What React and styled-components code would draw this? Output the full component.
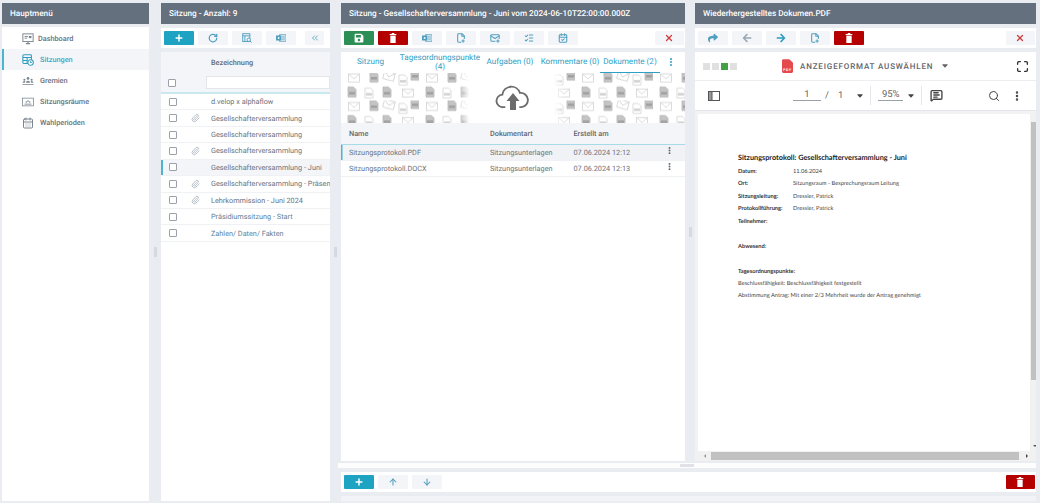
import React from "react";
import styled, { createGlobalStyle } from "styled-components";
import {
  Plus,
  RotateCw,
  X,
  ChevronsLeft,
  ListChecks,
  MailPlus,
  FilePlus2,
  Paperclip,
  CalendarDays,
  CalendarCheck,
  Search,
  MoreVertical,
  MessageSquareText,
  Maximize,
  ArrowUp,
  ArrowDown,
} from "lucide-react";
import { FaSave, FaArrowLeft, FaArrowRight, FaShare } from "react-icons/fa";
import { TiArrowSortedDown } from "react-icons/ti";

const GlobalStyle = createGlobalStyle`
  html, body {
    margin: 0;
    padding: 0;
    height: 100%;
    overflow: hidden;
    background: #e9ecf0;
    font-family: Roboto, "Liberation Sans", sans-serif;
    text-rendering: geometricPrecision;
  }
`;

const Page = styled.div`
  display: flex;
  width: 1040px;
  height: 503px;
  box-sizing: border-box;
  padding: 3px 4px 2px 2px;
`;

const Column = styled.div`
  display: flex;
  flex-direction: column;
  width: ${(p) => p.$width}px;
  flex: none;
  min-height: 0;
`;

const RightArea = styled.div`
  display: flex;
  flex-direction: column;
  flex: 1;
  min-width: 0;
`;

const TopPanels = styled.div`
  display: flex;
  height: 458px;
`;

const Gutter = styled.div`
  display: flex;
  align-items: center;
  justify-content: center;
  flex: none;
  width: ${(p) => p.$width}px;
`;

const GripV = styled.span`
  display: block;
  width: 3px;
  height: 10px;
  background: #d5dae1;
`;

const Header = styled.div`
  display: flex;
  align-items: center;
  flex: none;
  height: 21px;
  padding-left: 8px;
  background: #64707e;
  color: #fff;
  font-size: 8.2px;
  font-weight: 500;
  white-space: nowrap;
  overflow: hidden;
`;

const Menu = styled.div`
  flex: 1;
  margin-top: 3px;
  padding-top: 1px;
  background: #fff;
`;

const MenuItem = styled.div`
  display: flex;
  align-items: center;
  height: 21px;
  box-sizing: border-box;
  padding-left: 18px;
  gap: ${(p) => (p.$wide ? 6 : 4)}px;
  font-size: 7.3px;
  font-weight: 500;
  color: ${(p) => (p.$active ? "#3aa6c4" : "#67707c")};
  background: ${(p) => (p.$active ? "#f3f5f8" : "transparent")};
  border-left: 2px solid ${(p) => (p.$active ? "#4bb5cf" : "transparent")};
  svg {
    flex: none;
    width: 12px;
    height: 12px;
    color: ${(p) => (p.$active ? "#2f9dbd" : "#7c8590")};
  }
`;

const Toolbar = styled.div`
  display: flex;
  align-items: center;
  flex: none;
  gap: 4.5px;
  height: 20px;
  margin-top: 4px;
  padding: 0 1px 0 3px;
  box-sizing: border-box;
  background: #fff;
`;

const ToolButton = styled.div`
  display: flex;
  align-items: center;
  justify-content: center;
  flex: none;
  width: ${(p) => p.$width || 29.5}px;
  height: 14px;
  margin-left: ${(p) => (p.$push ? "auto" : p.$gap ? `${p.$gap}px` : 0)};
  border-radius: 1px;
  background: ${(p) =>
    ({ primary: "#1ea3c2", save: "#2c8f55", danger: "#b40000", close: "#f3f5f8" })[p.$kind] || "#f3f5f8"};
  color: ${(p) =>
    ({ primary: "#fff", save: "#fff", danger: "#fff", close: "#cc3a3a" })[p.$kind] || "#4f9fbe"};
  svg {
    width: 10px;
    height: 10px;
  }
`;

const ListBox = styled.div`
  flex: 1;
  margin-top: 4px;
  background: #fff;
  overflow: hidden;
  min-height: 0;
`;

const ListHead = styled.div`
  display: grid;
  grid-template-columns: 45px 1fr;
  grid-template-rows: 21px 19px;
  align-items: center;
  background: #f3f5f8;
  border-bottom: 2px solid #c9e9f1;
  font-size: 7.3px;
  font-weight: 500;
  color: #5e6772;
`;

const HeadTitle = styled.div`
  grid-column: 2;
  grid-row: 1;
  padding-left: 5px;
`;

const FilterInput = styled.input`
  grid-column: 2;
  grid-row: 2;
  width: 100%;
  height: 13px;
  padding: 0;
  box-sizing: border-box;
  border: 1px solid #e3e6ea;
  background: #fff;
  outline: none;
`;

const Check = styled.span`
  display: block;
  width: 8px;
  height: 8px;
  box-sizing: border-box;
  border: 1px solid #9aa1aa;
  border-radius: 1px;
  background: #fff;
  justify-self: center;
  ${(p) => p.$head && "grid-column: 1; grid-row: 2; margin-left: -23px;"}
`;

const Row = styled.div`
  display: grid;
  grid-template-columns: 23px 22px 1fr;
  align-items: center;
  height: 16.43px;
  box-sizing: border-box;
  border-bottom: 1px solid #eff1f4;
  box-shadow: ${(p) => (p.$active ? "inset 2px 0 0 #4bb5cf" : "none")};
  background: ${(p) => (p.$active ? "#f3f5f8" : "#fff")};
  font-size: 7.3px;
  color: #6a727d;
  white-space: nowrap;
  overflow: hidden;
  svg {
    width: 9px;
    height: 10px;
    color: #a9b1bc;
    justify-self: center;
  }
`;

const Label = styled.span`
  padding-left: 5px;
  color: ${(p) => (p.$blue ? "#5f8196" : "inherit")};
  overflow: hidden;
`;

const MainPanel = styled.div`
  flex: 1;
  display: flex;
  flex-direction: column;
  margin-top: 4px;
  background: #fff;
  min-height: 0;
  overflow: hidden;
`;

const Tabs = styled.div`
  display: flex;
  align-items: stretch;
  flex: none;
  height: 21px;
  font-size: 8.1px;
  color: #2ea0c4;
`;

const Tab = styled.div`
  display: flex;
  align-items: center;
  justify-content: center;
  text-align: center;
  line-height: 9.5px;
  flex: none;
  width: ${(p) => p.$width}px;
  box-sizing: border-box;
  white-space: pre;
  border-bottom: 1px solid ${(p) => (p.$active ? "#2ea0c4" : "transparent")};
  svg {
    width: 10px;
    height: 10px;
  }
`;

const DropArt = styled.svg`
  display: block;
  flex: none;
  width: 100%;
  height: 50px;
`;

const DocHead = styled.div`
  display: grid;
  grid-template-columns: 141px 83.5px 1fr 20px;
  align-items: center;
  flex: none;
  height: 21px;
  padding-left: 8px;
  background: #f3f5f8;
  font-size: 7.3px;
  font-weight: 500;
  color: #5e6772;
`;

const DocRow = styled(DocHead)`
  height: 16.5px;
  font-weight: 400;
  color: #6a727d;
  box-sizing: border-box;
  background: ${(p) => (p.$active ? "#f0f2f6" : "#fff")};
  border-bottom: 1px solid #eff1f4;
  border-top: ${(p) => (p.$active ? "1px solid #a8dbe8" : "none")};
  box-shadow: ${(p) => (p.$active ? "inset 1.5px 0 0 #4bb5cf" : "none")};
  svg {
    width: 9px;
    height: 9px;
    margin-top: -3px;
    color: #555e69;
  }
`;

const ViewerTop = styled.div`
  display: flex;
  align-items: center;
  flex: none;
  height: 28px;
  padding: 0 7px 0 8px;
  border-bottom: 1px solid #eceef1;
`;

const Swatches = styled.div`
  display: flex;
  gap: 2px;
`;

const Swatch = styled.span`
  display: block;
  width: 7px;
  height: 7px;
  background: ${(p) => (p.$on ? "#43a047" : "#e0e0e0")};
`;

const FormatPick = styled.div`
  display: flex;
  align-items: center;
  gap: 7px;
  margin-left: 45px;
  font-size: 8px;
  font-weight: 500;
  letter-spacing: 0.85px;
  color: #5f6368;
  svg.caret {
    width: 10px;
    height: 10px;
    color: #5f6368;
  }
`;

const PdfIcon = styled.svg`
  width: 11px;
  height: 14px;
  flex: none;
`;

const FullScreen = styled.div`
  display: flex;
  margin-left: auto;
  color: #333;
  svg {
    width: 13px;
    height: 13px;
  }
`;

const ViewerBar = styled.div`
  display: flex;
  align-items: center;
  flex: none;
  height: 29px;
  padding: 0 13px 0 13px;
  font-size: 9.5px;
  color: #5f6368;
  border-bottom: 1px solid #e4e6ea;
  svg {
    flex: none;
    color: #444;
  }
`;

const SidebarIcon = styled.svg`
  width: 12px;
  height: 10px;
`;

const PageNum = styled.span`
  display: block;
  width: 28px;
  text-align: center;
  border-bottom: 1px solid #9aa0a6;
  line-height: 10px;
  margin-left: 73px;
`;

const Slash = styled.span`
  margin: 0 9px 0 4px;
`;

const Caret = styled(TiArrowSortedDown)`
  width: 10px;
  height: 10px;
  margin-left: ${(p) => p.$left}px;
`;

const Sep = styled.span`
  display: block;
  width: 1px;
  height: 19px;
  margin: ${(p) => p.$margin};
  background: #e4e6ea;
`;

const ZoomVal = styled.span`
  display: block;
  width: 25px;
  text-align: center;
  border-bottom: 1px solid #9aa0a6;
  line-height: 10px;
`;

const FindIcon = styled(Search)`
  width: 12px;
  height: 12px;
  margin-left: auto;
`;

const MoreIcon = styled(MoreVertical)`
  width: 12px;
  height: 12px;
  margin-left: 11px;
`;

const ScrollWrap = styled.div`
  flex: 1;
  display: grid;
  grid-template-columns: 1fr 9px;
  grid-template-rows: 1fr 10px;
  min-height: 0;
  background: #f1f2f4;
  padding: 3px 0 0 3px;
`;

const DocPage = styled.div`
  background: #fff;
  padding: 37px 0 0 40px;
  overflow: hidden;
  font-family: Lato, "Open Sans", sans-serif;
  font-size: 5.7px;
  color: #444;
  white-space: nowrap;
`;

const DocTitle = styled.div`
  height: 14px;
  line-height: 14px;
  font-size: 7.3px;
  font-weight: 700;
  color: #222;
`;

const DocLine = styled.div`
  display: grid;
  grid-template-columns: 55px 1fr;
  align-items: center;
  height: 12.5px;
  b {
    font-weight: 700;
    color: #333;
  }
`;

const DocText = styled.div`
  line-height: 12.5px;
`;

const Spacer = styled.div`
  height: ${(p) => p.$h}px;
`;

const ScrollV = styled.div`
  display: flex;
  flex-direction: column;
  align-items: center;
  background: #f1f1f1;
`;

const ThumbV = styled.div`
  width: 8px;
  height: 258px;
  margin-top: 8px;
  background: #c1c1c1;
`;

const ArrowTip = styled.span`
  margin-top: auto;
  margin-bottom: 2px;
  border: 2.5px solid transparent;
  border-top-color: #555;
`;

const ScrollH = styled.div`
  display: flex;
  align-items: center;
  background: #f1f1f1;
  padding-left: 6px;
`;

const ThumbH = styled.div`
  width: 308px;
  height: 8px;
  margin-left: 5px;
  background: #c1c1c1;
`;

const Arrow = styled.span`
  border: 2.5px solid transparent;
  ${(p) =>
    p.$dir === "left"
      ? "border-right-color: #999; margin-left: -2px;"
      : "border-left-color: #444; margin-left: 7px;"}
`;

const HandleBand = styled.div`
  display: flex;
  align-items: center;
  justify-content: center;
  flex: none;
  height: 5px;
  margin: 2px 0 0 -3px;
  background: #fdfdfe;
`;

const GripH = styled.span`
  display: block;
  width: 14px;
  height: 3px;
  background: #dfe3e8;
`;

const FootStrip = styled.div`
  flex: none;
  height: 5px;
  margin-top: 4px;
  background: #f1f3f6;
`;

const listRows = [
  { name: "d.velop x alphaflow" },
  { name: "Gesellschafterversammlung", clip: true },
  { name: "Gesellschafterversammlung" },
  { name: "Gesellschafterversammlung", clip: true },
  { name: "Gesellschafterversammlung - Juni", active: true },
  { name: "Gesellschafterversammlung - Präsen", clip: true },
  { name: "Lehrkommission - Juni 2024", clip: true },
  { name: "Präsidiumssitzung - Start" },
  { name: "Zahlen/ Daten/ Fakten" },
];

function TrashIcon() {
  return (
    <svg viewBox="0 0 10 12" fill="currentColor">
      <rect x="3.5" y="0" width="3" height="1.2" />
      <rect x="1" y="1.2" width="8" height="1.3" />
      <rect x="1.8" y="3.2" width="6.4" height="8.8" />
    </svg>
  );
}

function OutlookIcon() {
  return (
    <svg viewBox="0 0 14 12">
      <rect x="5" y="1.5" width="9" height="9" fill="none" stroke="currentColor" strokeWidth="1.2" />
      <path d="M8 4.2 H12.5 M8 6 H12.5 M8 7.8 H12.5" stroke="currentColor" strokeWidth="0.9" />
      <rect x="0" y="2.5" width="7.5" height="7" fill="currentColor" />
      <circle cx="3.7" cy="6" r="1.4" fill="#f3f5f8" />
    </svg>
  );
}

function SearchFileIcon() {
  return (
    <svg viewBox="0 0 14 14" fill="none" stroke="currentColor" strokeWidth="1.3">
      <rect x="1" y="1" width="10" height="11" />
      <path d="M1 4 H11 M4 4 V12" />
      <circle cx="9.5" cy="9.5" r="2.4" fill="#f3f5f8" />
      <path d="M11.3 11.3 L13.5 13.5" />
    </svg>
  );
}

function MeetingIcon() {
  return (
    <svg viewBox="0 0 14 14" fill="none" stroke="currentColor" strokeWidth="1.2">
      <rect x="1" y="1" width="10" height="10" rx="1" />
      <path d="M1 4 H11 M6 4 V11 M1 7.5 H6" />
      <circle cx="10" cy="10" r="3.2" fill="#fff" />
      <path d="M10 8.4 V10 H11.4" />
    </svg>
  );
}

function DeskIcon() {
  return (
    <svg viewBox="0 0 14 14" fill="none" stroke="currentColor" strokeWidth="1.1">
      <rect x="1" y="1" width="12" height="9" />
      <path d="M3 4 H7 M3 6 H6" />
      <rect x="8" y="3.5" width="3" height="2.5" fill="currentColor" stroke="none" />
      <path d="M7 10 V12 M4.5 12.5 H9.5" strokeWidth="1.4" />
    </svg>
  );
}

function GroupIcon() {
  return (
    <svg viewBox="0 0 14 12" fill="currentColor">
      <circle cx="7" cy="3" r="1.6" />
      <path d="M4.6 8 a2.4 2.4 0 0 1 4.8 0 Z" />
      <circle cx="2.8" cy="4.5" r="1.2" />
      <path d="M0.8 8 a2 2 0 0 1 3 -1.7 L3.4 8 Z" />
      <circle cx="11.2" cy="4.5" r="1.2" />
      <path d="M13.2 8 a2 2 0 0 0 -3 -1.7 L10.6 8 Z" />
      <rect x="0.5" y="9.5" width="13" height="0.9" />
    </svg>
  );
}

function RoomIcon() {
  return (
    <svg viewBox="0 0 14 12" fill="none" stroke="currentColor" strokeWidth="0.9">
      <rect x="0.5" y="1.5" width="13" height="9" />
      <path d="M3 8.5 H11" strokeWidth="1" />
      <circle cx="5" cy="6" r="0.9" fill="currentColor" stroke="none" />
      <circle cx="7" cy="5" r="0.9" fill="currentColor" stroke="none" />
      <circle cx="9" cy="6" r="0.9" fill="currentColor" stroke="none" />
    </svg>
  );
}

function Envelope({ x, y, r = 0 }) {
  return (
    <g transform={`translate(${x} ${y}) rotate(${r})`} stroke="#d2d2d2" strokeWidth="0.8" fill="none">
      <rect x="-5.5" y="-4" width="11" height="8" />
      <path d="M-5.5 -4 L0 1 L5.5 -4" />
    </g>
  );
}

function DocMark({ x, y, dark }) {
  return (
    <g transform={`translate(${x} ${y})`}>
      <path
        d="M-4 -5 H1.5 L4 -2.5 V5 H-4 Z"
        fill={dark ? "#c4c4c4" : "#fff"}
        stroke={dark ? "#b5b5b5" : "#d2d2d2"}
        strokeWidth="0.8"
      />
      <rect x="-3" y="0" width="6" height="2.5" fill={dark ? "#a0a0a0" : "#d2d2d2"} />
    </g>
  );
}

function DropZoneArt() {
  return (
    <DropArt viewBox="0 0 344 50" preserveAspectRatio="none">
      <defs>
        <pattern id="docs" width="78" height="28.5" patternUnits="userSpaceOnUse" x="0" y="-1">
          <Envelope x="13" y="6" />
          <DocMark x="33" y="5" dark />
          <Envelope x="48" y="4" r="15" />
          <DocMark x="62" y="8" />
          <DocMark x="74" y="3" dark />
          <DocMark x="11" y="20" dark />
          <DocMark x="28" y="21" />
          <DocMark x="46" y="20" dark />
          <Envelope x="67" y="21" />
        </pattern>
        <linearGradient id="fade" x1="0" x2="1" y1="0" y2="0">
          <stop offset="0" stopColor="#fff" stopOpacity="0" />
          <stop offset="0.1" stopColor="#fff" />
          <stop offset="0.9" stopColor="#fff" />
          <stop offset="1" stopColor="#fff" stopOpacity="0" />
        </linearGradient>
      </defs>
      <rect width="344" height="50" fill="#fff" />
      <rect width="344" height="50" fill="url(#docs)" />
      <rect x="118" width="105" height="50" fill="url(#fade)" />
      <g transform="translate(154.5 9) scale(1.4)" fill="none" stroke="#6c6c6c" strokeWidth="1.3">
        <path d="M7 18 H5.5 a4.5 4.5 0 0 1 -0.6 -9 a6.5 6.5 0 0 1 12.6 -1.2 a5 5 0 0 1 1 10.2 H17" />
      </g>
      <path d="M172 20 L178.5 28 H175 V37 H169 V28 H165.5 Z" fill="#6c6c6c" />
    </DropArt>
  );
}

export default function App() {
  return (
    <>
      <GlobalStyle />
      <Page>
        <Column $width={147}>
          <Header>Hauptmenü</Header>
          <Menu>
            <MenuItem>
              <DeskIcon />
              Dashboard
            </MenuItem>
            <MenuItem $active $wide>
              <MeetingIcon />
              Sitzungen
            </MenuItem>
            <MenuItem $wide>
              <GroupIcon />
              Gremien
            </MenuItem>
            <MenuItem $wide>
              <RoomIcon />
              Sitzungsräume
            </MenuItem>
            <MenuItem $wide>
              <CalendarDays />
              Wahlperioden
            </MenuItem>
          </Menu>
        </Column>
        <Gutter $width={12}>
          <GripV />
        </Gutter>
        <Column $width={169}>
          <Header>Sitzung - Anzahl: 9</Header>
          <Toolbar>
            <ToolButton $kind="primary">
              <Plus strokeWidth={3.5} />
            </ToolButton>
            <ToolButton>
              <RotateCw strokeWidth={3} />
            </ToolButton>
            <ToolButton>
              <SearchFileIcon />
            </ToolButton>
            <ToolButton>
              <OutlookIcon />
            </ToolButton>
            <ToolButton $width={19} $gap={5}>
              <ChevronsLeft strokeWidth={2} />
            </ToolButton>
          </Toolbar>
          <ListBox>
            <ListHead>
              <HeadTitle>Bezeichnung</HeadTitle>
              <Check $head />
              <FilterInput readOnly />
            </ListHead>
            {listRows.map((row, i) => (
              <Row key={i} $active={row.active}>
                <Check />
                {row.clip ? <Paperclip strokeWidth={2} /> : <span />}
                <Label $blue={i >= 7}>{row.name}</Label>
              </Row>
            ))}
          </ListBox>
        </Column>
        <Gutter $width={11}>
          <GripV />
        </Gutter>
        <RightArea>
          <TopPanels>
            <Column $width={344}>
              <Header>Sitzung - Gesellschafterversammlung - Juni vom 2024-06-10T22:00:00.000Z</Header>
              <Toolbar>
                <ToolButton $kind="save">
                  <FaSave />
                </ToolButton>
                <ToolButton $kind="danger">
                  <TrashIcon />
                </ToolButton>
                <ToolButton>
                  <OutlookIcon />
                </ToolButton>
                <ToolButton>
                  <FilePlus2 strokeWidth={2.5} />
                </ToolButton>
                <ToolButton>
                  <MailPlus strokeWidth={2.5} />
                </ToolButton>
                <ToolButton>
                  <ListChecks strokeWidth={2.5} />
                </ToolButton>
                <ToolButton>
                  <CalendarCheck strokeWidth={2.5} />
                </ToolButton>
                <ToolButton $kind="close" $push>
                  <X strokeWidth={3} />
                </ToolButton>
              </Toolbar>
              <MainPanel>
                <Tabs>
                  <Tab $width={59}>Sitzung</Tab>
                  <Tab $width={80}>{"Tagesordnungspunkte\n(4)"}</Tab>
                  <Tab $width={60}>Aufgaben (0)</Tab>
                  <Tab $width={60}>Kommentare (0)</Tab>
                  <Tab $width={60} $active>
                    Dokumente (2)
                  </Tab>
                  <Tab $width={22}>
                    <MoreVertical strokeWidth={3} />
                  </Tab>
                </Tabs>
                <DropZoneArt />
                <DocHead>
                  <span>Name</span>
                  <span>Dokumentart</span>
                  <span>Erstellt am</span>
                </DocHead>
                <DocRow $active>
                  <span>Sitzungsprotokoll.PDF</span>
                  <span>Sitzungsunterlagen</span>
                  <span>07.06.2024 12:12</span>
                  <MoreVertical strokeWidth={3} />
                </DocRow>
                <DocRow>
                  <span>Sitzungsprotokoll.DOCX</span>
                  <span>Sitzungsunterlagen</span>
                  <span>07.06.2024 12:13</span>
                  <MoreVertical strokeWidth={3} />
                </DocRow>
              </MainPanel>
            </Column>
            <Gutter $width={10}>
              <GripV />
            </Gutter>
            <Column $width={341}>
              <Header>Wiederhergestelltes Dokumen.PDF</Header>
              <Toolbar>
                <ToolButton>
                  <FaShare />
                </ToolButton>
                <ToolButton>
                  <FaArrowLeft color="#9aa7b5" />
                </ToolButton>
                <ToolButton>
                  <FaArrowRight color="#2d9cc0" />
                </ToolButton>
                <ToolButton>
                  <FilePlus2 strokeWidth={2.5} />
                </ToolButton>
                <ToolButton $kind="danger">
                  <TrashIcon />
                </ToolButton>
                <ToolButton $kind="close" $push>
                  <X strokeWidth={3} />
                </ToolButton>
              </Toolbar>
              <MainPanel>
                <ViewerTop>
                  <Swatches>
                    <Swatch />
                    <Swatch />
                    <Swatch $on />
                    <Swatch />
                  </Swatches>
                  <FormatPick>
                    <PdfIcon viewBox="0 0 12 15">
                      <path d="M1.5 0 H8 L12 4 V13.5 a1.5 1.5 0 0 1 -1.5 1.5 H1.5 A1.5 1.5 0 0 1 0 13.5 V1.5 A1.5 1.5 0 0 1 1.5 0 Z" fill="#e5484d" />
                      <text x="6" y="12.5" textAnchor="middle" fontSize="4" fontWeight="700" fill="#fff">
                        PDF
                      </text>
                    </PdfIcon>
                    ANZEIGEFORMAT AUSWÄHLEN
                    <TiArrowSortedDown className="caret" />
                  </FormatPick>
                  <FullScreen>
                    <Maximize strokeWidth={2.5} />
                  </FullScreen>
                </ViewerTop>
                <ViewerBar>
                  <SidebarIcon viewBox="0 0 12 10">
                    <rect x="0.5" y="0.5" width="11" height="9" fill="none" stroke="#555" />
                    <rect x="0.5" y="0.5" width="3.5" height="9" fill="#999" stroke="#555" />
                  </SidebarIcon>
                  <PageNum>1</PageNum>
                  <Slash>/</Slash>
                  <span>1</span>
                  <Caret $left={12} />
                  <Sep $margin="0 7px 0 5px" />
                  <ZoomVal>95%</ZoomVal>
                  <Caret $left={3} />
                  <Sep $margin="0 8px 0 5px" />
                  <MessageSquareText size={13} strokeWidth={2.5} />
                  <FindIcon strokeWidth={2} />
                  <MoreIcon strokeWidth={3} />
                </ViewerBar>
                <ScrollWrap>
                  <DocPage>
                    <DocTitle>Sitzungsprotokoll: Gesellschafterversammlung - Juni</DocTitle>
                    <DocLine>
                      <b>Datum:</b>
                      <span>11.06.2024</span>
                    </DocLine>
                    <DocLine>
                      <b>Ort:</b>
                      <span>Sitzungsraum - Besprechungsraum Leitung</span>
                    </DocLine>
                    <DocLine>
                      <b>Sitzungsleitung:</b>
                      <span>Dressler, Patrick</span>
                    </DocLine>
                    <DocLine>
                      <b>Protokollführung:</b>
                      <span>Dressler, Patrick</span>
                    </DocLine>
                    <DocLine>
                      <b>Teilnehmer:</b>
                    </DocLine>
                    <Spacer $h={12.5} />
                    <DocLine>
                      <b>Abwesend:</b>
                    </DocLine>
                    <Spacer $h={12.5} />
                    <DocLine>
                      <b>Tagesordnungspunkte:</b>
                    </DocLine>
                    <DocText>Beschlussfähigkeit: Beschlussfähigkeit festgestellt</DocText>
                    <DocText>Abstimmung Antrag: Mit einer 2/3 Mehrheit wurde der Antrag genehmigt</DocText>
                  </DocPage>
                  <ScrollV>
                    <ThumbV />
                    <ArrowTip />
                  </ScrollV>
                  <ScrollH>
                    <Arrow $dir="left" />
                    <ThumbH />
                    <Arrow />
                  </ScrollH>
                  <ScrollV />
                </ScrollWrap>
              </MainPanel>
            </Column>
          </TopPanels>
          <HandleBand>
            <GripH />
          </HandleBand>
          <Toolbar>
            <ToolButton $kind="primary">
              <Plus strokeWidth={3.5} />
            </ToolButton>
            <ToolButton>
              <ArrowUp strokeWidth={2.5} />
            </ToolButton>
            <ToolButton>
              <ArrowDown strokeWidth={2.5} />
            </ToolButton>
            <ToolButton $kind="danger" $push>
              <TrashIcon />
            </ToolButton>
          </Toolbar>
          <FootStrip />
        </RightArea>
      </Page>
    </>
  );
}
